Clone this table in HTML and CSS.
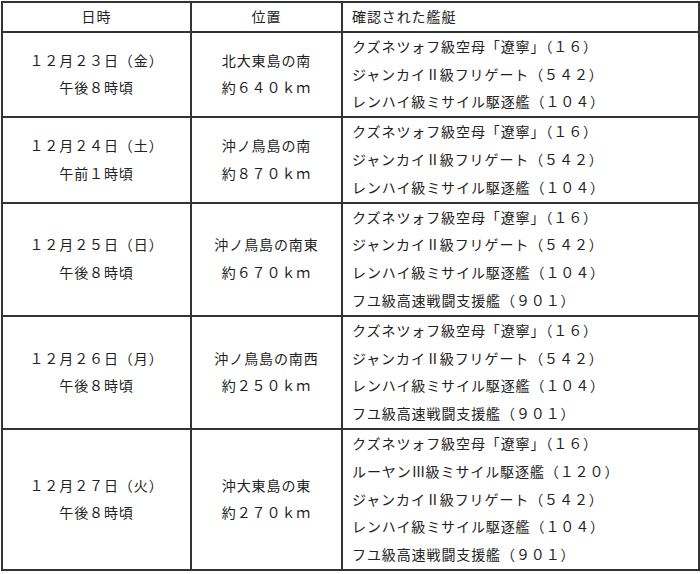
FILE: index.html
```html
<!DOCTYPE html>
<html lang="ja">
<head>
<meta charset="utf-8">
<title>確認された艦艇</title>
<link rel="stylesheet" href="styles.css">
</head>
<body>
<table class="ships">
  <colgroup>
    <col class="c-date">
    <col class="c-pos">
    <col class="c-ship">
  </colgroup>
  <thead>
    <tr>
      <th class="center">日時</th>
      <th class="center">位置</th>
      <th class="left">確認された艦艇</th>
    </tr>
  </thead>
  <tbody>
    <tr>
      <td class="center">１２月２３日（金）<br>午後８時頃</td>
      <td class="center">北大東島の南<br>約６４０ｋｍ</td>
      <td class="left">クズネツォフ級空母「遼寧」（１６）<br>ジャンカイ<span class="roman">Ⅱ</span>級フリゲート（５４２）<br>レンハイ級ミサイル駆逐艦（１０４）</td>
    </tr>
    <tr>
      <td class="center">１２月２４日（土）<br>午前１時頃</td>
      <td class="center">沖ノ鳥島の南<br>約８７０ｋｍ</td>
      <td class="left">クズネツォフ級空母「遼寧」（１６）<br>ジャンカイ<span class="roman">Ⅱ</span>級フリゲート（５４２）<br>レンハイ級ミサイル駆逐艦（１０４）</td>
    </tr>
    <tr>
      <td class="center">１２月２５日（日）<br>午後８時頃</td>
      <td class="center">沖ノ鳥島の南東<br>約６７０ｋｍ</td>
      <td class="left">クズネツォフ級空母「遼寧」（１６）<br>ジャンカイ<span class="roman">Ⅱ</span>級フリゲート（５４２）<br>レンハイ級ミサイル駆逐艦（１０４）<br>フユ級高速戦闘支援艦（９０１）</td>
    </tr>
    <tr>
      <td class="center">１２月２６日（月）<br>午後８時頃</td>
      <td class="center">沖ノ鳥島の南西<br>約２５０ｋｍ</td>
      <td class="left">クズネツォフ級空母「遼寧」（１６）<br>ジャンカイ<span class="roman">Ⅱ</span>級フリゲート（５４２）<br>レンハイ級ミサイル駆逐艦（１０４）<br>フユ級高速戦闘支援艦（９０１）</td>
    </tr>
    <tr>
      <td class="center">１２月２７日（火）<br>午後８時頃</td>
      <td class="center">沖大東島の東<br>約２７０ｋｍ</td>
      <td class="left">クズネツォフ級空母「遼寧」（１６）<br>ルーヤン<span class="roman">Ⅲ</span>級ミサイル駆逐艦（１２０）<br>ジャンカイ<span class="roman">Ⅱ</span>級フリゲート（５４２）<br>レンハイ級ミサイル駆逐艦（１０４）<br>フユ級高速戦闘支援艦（９０１）</td>
    </tr>
  </tbody>
</table>
</body>
</html>
```
FILE: styles.css
```css
html, body {
  margin: 0;
  padding: 0;
  background: #ffffff;
}

body {
  font-family: "Noto Sans CJK JP", "Noto Sans CJK SC", sans-serif;
  font-size: 14px;
  color: #222222;
}

.ships {
  border-collapse: collapse;
  margin: 1px 0 0 1px;
  width: 697px;
  table-layout: fixed;
}

.c-date { width: 189px; }
.c-pos { width: 151px; }
.c-ship { width: 357px; }

.ships th,
.ships td {
  border: 2px solid #333333;
  padding: 0;
  line-height: 27.8px;
  font-weight: 400;
  vertical-align: middle;
  letter-spacing: 0.9px;
}

.center {
  text-align: center;
}

.left {
  text-align: left;
  padding-left: 9px !important;
}

.roman {
  display: inline-block;
  width: 14px;
  text-align: center;
}
```
